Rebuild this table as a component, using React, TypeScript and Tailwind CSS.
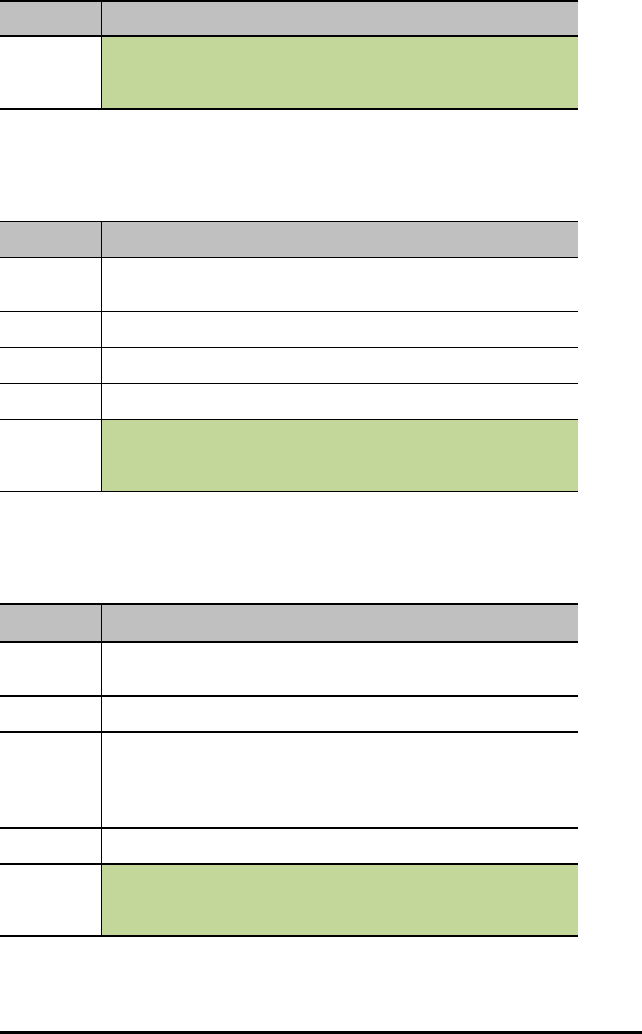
import React from 'react';

type Row = { h: string; head?: boolean; green?: boolean };

const Table = ({ rows, thick, top }: { rows: Row[]; thick: boolean; top: string }) => {
  const line = thick ? 'border-b-2' : 'border-b';
  return (
    <div className={`w-[578px] border-black ${thick ? 'border-t-2' : 'border-t'} ${top}`}>
      {rows.map((r, i) => (
        <div key={i} className={`flex ${r.h} ${line} border-black`}>
          <div className={`w-[102px] border-r border-black ${r.head ? 'bg-[#c0c0c0]' : 'bg-white'}`} />
          <div className={`flex-1 ${r.head ? 'bg-[#c0c0c0]' : r.green ? 'bg-[#c4d79b]' : 'bg-white'}`} />
        </div>
      ))}
    </div>
  );
};

export default function App() {
  return (
    <div className="w-[642px] h-[1034px] bg-white flex flex-col font-['Liberation_Sans',sans-serif]">
      <Table
        thick
        top="mt-0"
        rows={[
          { h: 'h-[35px]', head: true },
          { h: 'h-[73px]', green: true },
        ]}
      />
      <Table
        thick={false}
        top="mt-[111px]"
        rows={[
          { h: 'h-[36px]', head: true },
          { h: 'h-[54px]' },
          { h: 'h-[36px]' },
          { h: 'h-[36px]' },
          { h: 'h-[36px]' },
          { h: 'h-[72px]', green: true },
        ]}
      />
      <Table
        thick
        top="mt-[111px]"
        rows={[
          { h: 'h-[38px]', head: true },
          { h: 'h-[54px]' },
          { h: 'h-[36px]' },
          { h: 'h-[96px]' },
          { h: 'h-[36px]' },
          { h: 'h-[72px]', green: true },
        ]}
      />
      <div className="mt-[94px] h-[3px] w-full bg-black" />
    </div>
  );
}
